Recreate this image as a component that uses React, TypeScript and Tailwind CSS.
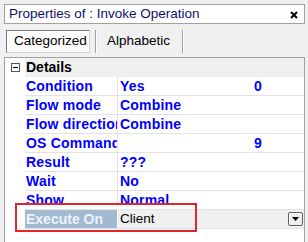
import React from "react";

const ROWS = [
  { name: "Condition", value: "Yes", num: "0" },
  { name: "Flow mode", value: "Combine" },
  { name: "Flow direction", value: "Combine" },
  { name: "OS Command", value: "", num: "9" },
  { name: "Result", value: "???" },
  { name: "Wait", value: "No" },
  { name: "Show", value: "Normal" },
];

function PropRow({ name, value, num }: { name: string; value: string; num?: string }) {
  return (
    <div className="flex h-[19px]">
      <div className="w-[20px] shrink-0 bg-white" />
      <div className="flex flex-1 border-b border-[#e3e3e3]">
        <div className="w-[93px] shrink-0 overflow-hidden whitespace-nowrap border-r border-[#e3e3e3] pl-px text-[14px] font-bold leading-[18px] tracking-[0.2px] text-[#0000ff]">
          {name}
        </div>
        <div className="flex-1 pl-[2px] text-[14px] font-bold leading-[18px] tracking-[0.2px] text-[#0000ff]">
          <span className="flex w-[142px] justify-between whitespace-nowrap">
            <span>{value}</span>
            <span>{num}</span>
          </span>
        </div>
      </div>
    </div>
  );
}

export default function App() {
  return (
    <div className="relative flex h-[242px] w-[308px] flex-col overflow-hidden bg-[#f0f0f0] font-['Liberation_Sans',Arial,sans-serif]">
      {/* title */}
      <div className="ml-[4px] mt-[4px] flex h-[20px] w-[301px] items-center justify-between border border-[#a0a0a0] bg-white pl-[4px] pr-[6px]">
        <span className="text-[13.5px] leading-none text-[#10106a]">Properties of : Invoke Operation</span>
        <svg width="8" height="8" viewBox="0 0 8 8" className="mt-[1px]">
          <path d="M1 1 L7 7 M7 1 L1 7" stroke="#000" strokeWidth="2" />
        </svg>
      </div>

      {/* tabs */}
      <div className="mt-[6px] flex h-[23px] items-stretch">
        <div className="ml-[6px] flex w-[84px] items-center border-b border-l border-r border-t border-b-[#d0d0d0] border-l-[#7a7a7a] border-r-[#d0d0d0] border-t-[#7a7a7a] bg-[#fcfcfc] pl-[7px] text-[13.5px] text-black">
          Categorized
        </div>
        <div className="ml-[5px] w-px bg-[#a0a0a0]" />
        <div className="w-px bg-white" />
        <div className="flex w-[85px] items-center pl-[10px] text-[13.5px] text-black">Alphabetic</div>
        <div className="w-px bg-[#a0a0a0]" />
        <div className="w-px bg-white" />
      </div>

      {/* grid */}
      <div className="ml-[4px] mt-[4px] flex w-[301px] flex-1 flex-col border-l border-r border-t border-[#a0a0a0] bg-white">
        <div className="flex h-[19px]">
          <div className="flex w-[20px] shrink-0 items-center bg-white pl-[6px]">
            <div className="flex h-[9px] w-[9px] items-center justify-center border border-[#555555] bg-white">
              <div className="h-px w-[5px] bg-black" />
            </div>
          </div>
          <div className="flex-1 bg-[#f0f0f0] pl-px text-[14px] font-bold leading-[19px] text-black">Details</div>
        </div>

        {ROWS.map((r) => (
          <PropRow key={r.name} name={r.name} value={r.value} num={r.num} />
        ))}

        <div className="flex h-[19px]">
          <div className="w-[20px] shrink-0 bg-white" />
          <div className="flex flex-1 border-b border-[#e3e3e3]">
            <div className="w-[92px] shrink-0 overflow-hidden whitespace-nowrap bg-[#a2b9d2] pl-px text-[14px] font-bold leading-[18px] text-[#eef3f9]">
              Execute On
            </div>
            <div className="ml-px flex flex-1 items-center justify-between bg-[#f0f0f0] pl-[2px] pr-px">
              <span className="text-[13.5px] leading-[18px] text-black">Client</span>
              <div className="flex h-[14px] w-[15px] items-center justify-center rounded-[2px] border border-[#5f5f5f] bg-[#ededed] shadow-[inset_1px_1px_0_#ffffff]">
                <svg width="7" height="4" viewBox="0 0 7 4">
                  <path d="M0 0 H7 L3.5 4 Z" fill="#000" />
                </svg>
              </div>
            </div>
          </div>
        </div>
      </div>

      {/* annotation */}
      <div className="pointer-events-none absolute left-[15px] top-[203px] h-[29px] w-[182px] border-2 border-[#e3262b]">
        <div className="h-[4px] w-full bg-white" />
      </div>
    </div>
  );
}
